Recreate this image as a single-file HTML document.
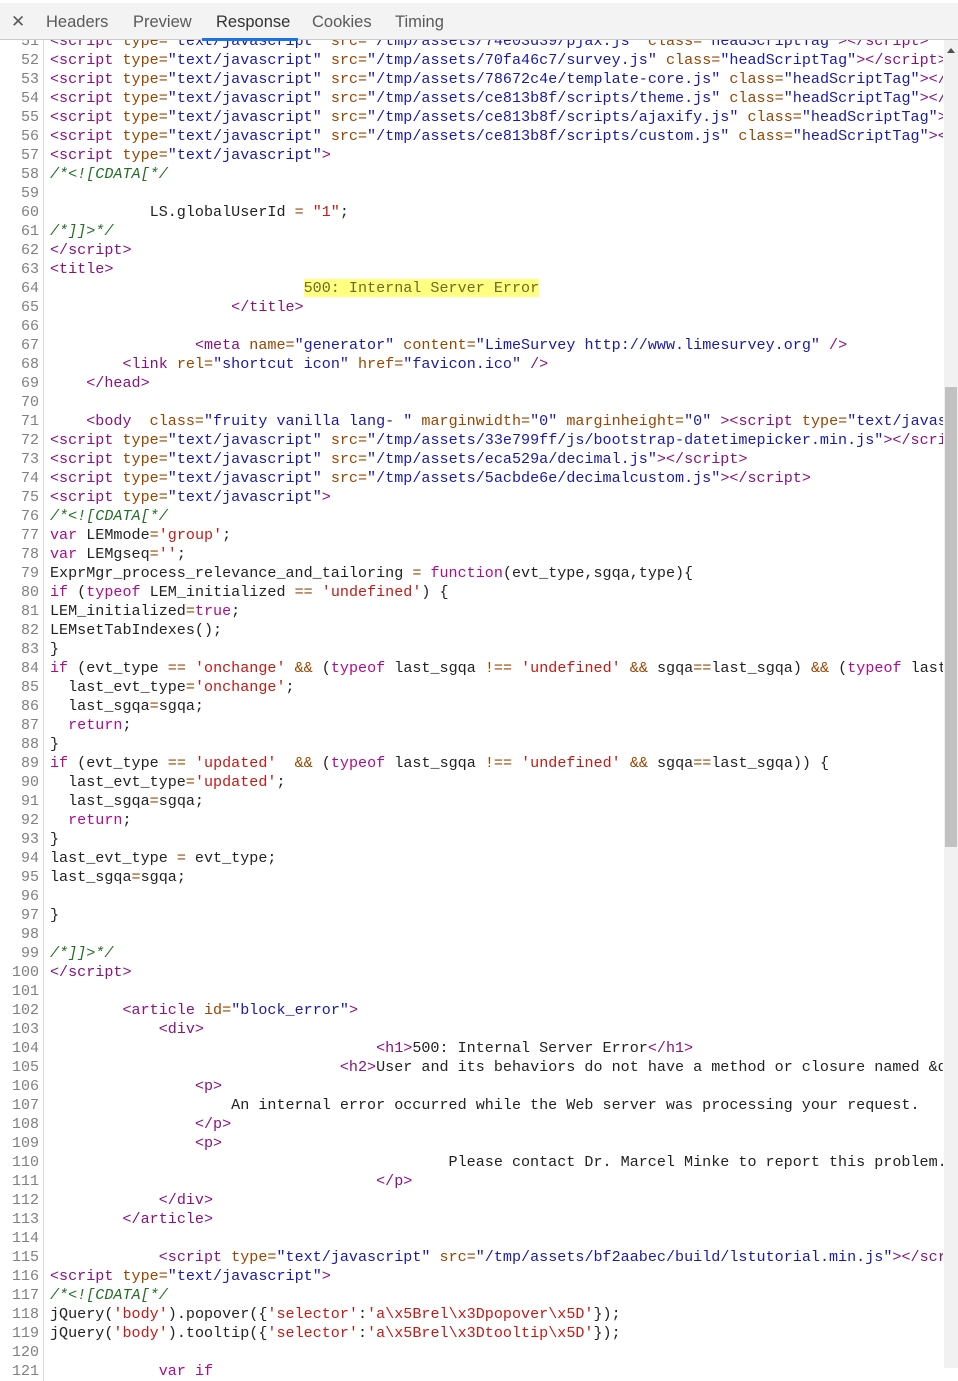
<!DOCTYPE html>
<html><head><meta charset="utf-8"><style>
html,body{margin:0;padding:0;width:958px;height:1368px;overflow:hidden;background:#fff}
#hdr{position:absolute;left:0;top:0;width:958px;height:40px;background:#f3f3f3;border-bottom:1px solid #ccc;box-sizing:border-box;border-top:3px solid #fff;z-index:2;font-family:"Liberation Sans",sans-serif;font-size:16.5px;color:#5a5a5a}
#hdr span{position:absolute;top:10px}
#ul{position:absolute;left:202px;top:35px;width:96px;height:3px;background:#1a73e8}
#code{position:absolute;left:0;top:32px;width:943px;overflow:hidden;font-family:"Liberation Mono",monospace;font-size:15.1px;line-height:19px;color:#222}
.r{display:flex;height:19px;white-space:pre}
.n{width:39px;text-align:right;color:#808080;border-right:1px solid #ddd;padding-right:4px;box-sizing:content-box;flex:none;font-size:15px}
.l{padding-left:6px}
.t{color:#881280}.a{color:#994500}.v{color:#1a1aa6}.k{color:#aa0d91}.s{color:#c41a16}.c{color:#236e25;font-style:italic}
.h{background:#ffff80;color:#6b6b2b}
#sb{position:absolute;left:944px;top:40px;width:14px;height:1328px;background:#f1f1f1}
#th{position:absolute;left:945px;top:387px;width:12px;height:460px;background:#c1c1c1}
#ar{position:absolute;left:947px;top:48px;width:0;height:0;border-left:4px solid transparent;border-right:4px solid transparent;border-bottom:5px solid #505050}
</style></head><body>
<div id="hdr"><span style="left:11px;font-size:17px;top:9px">✕</span><span style="left:46px">Headers</span><span style="left:133px">Preview</span><span style="left:216px;color:#333">Response</span><span style="left:312px">Cookies</span><span style="left:395px">Timing</span><div id="ul"></div></div>
<div id="code">
<div class="r"><span class="n">51</span><span class="l"><span class="t">&lt;script </span><span class="a">type=</span><span class="v">"text/javascript"</span> <span class="a">src=</span><span class="v">"/tmp/assets/74e03d39/pjax.js"</span> <span class="a">class=</span><span class="v">"headScriptTag"</span><span class="t">&gt;&lt;/script&gt;</span></span></div>
<div class="r"><span class="n">52</span><span class="l"><span class="t">&lt;script </span><span class="a">type=</span><span class="v">"text/javascript"</span> <span class="a">src=</span><span class="v">"/tmp/assets/70fa46c7/survey.js"</span> <span class="a">class=</span><span class="v">"headScriptTag"</span><span class="t">&gt;&lt;/script&gt;</span></span></div>
<div class="r"><span class="n">53</span><span class="l"><span class="t">&lt;script </span><span class="a">type=</span><span class="v">"text/javascript"</span> <span class="a">src=</span><span class="v">"/tmp/assets/78672c4e/template-core.js"</span> <span class="a">class=</span><span class="v">"headScriptTag"</span><span class="t">&gt;&lt;/script&gt;</span></span></div>
<div class="r"><span class="n">54</span><span class="l"><span class="t">&lt;script </span><span class="a">type=</span><span class="v">"text/javascript"</span> <span class="a">src=</span><span class="v">"/tmp/assets/ce813b8f/scripts/theme.js"</span> <span class="a">class=</span><span class="v">"headScriptTag"</span><span class="t">&gt;&lt;/script&gt;</span></span></div>
<div class="r"><span class="n">55</span><span class="l"><span class="t">&lt;script </span><span class="a">type=</span><span class="v">"text/javascript"</span> <span class="a">src=</span><span class="v">"/tmp/assets/ce813b8f/scripts/ajaxify.js"</span> <span class="a">class=</span><span class="v">"headScriptTag"</span><span class="t">&gt;&lt;/script&gt;</span></span></div>
<div class="r"><span class="n">56</span><span class="l"><span class="t">&lt;script </span><span class="a">type=</span><span class="v">"text/javascript"</span> <span class="a">src=</span><span class="v">"/tmp/assets/ce813b8f/scripts/custom.js"</span> <span class="a">class=</span><span class="v">"headScriptTag"</span><span class="t">&gt;&lt;/script&gt;</span></span></div>
<div class="r"><span class="n">57</span><span class="l"><span class="t">&lt;script </span><span class="a">type=</span><span class="v">"text/javascript"</span><span class="t">&gt;</span></span></div>
<div class="r"><span class="n">58</span><span class="l"><span class="c">/*&lt;![CDATA[*/</span></span></div>
<div class="r"><span class="n">59</span><span class="l"></span></div>
<div class="r"><span class="n">60</span><span class="l">           LS.globalUserId <span class="a">=</span> <span class="s">"1"</span>;</span></div>
<div class="r"><span class="n">61</span><span class="l"><span class="c">/*]]&gt;*/</span></span></div>
<div class="r"><span class="n">62</span><span class="l"><span class="t">&lt;/script&gt;</span></span></div>
<div class="r"><span class="n">63</span><span class="l"><span class="t">&lt;title&gt;</span></span></div>
<div class="r"><span class="n">64</span><span class="l">                            <span class="h">500: Internal Server Error</span></span></div>
<div class="r"><span class="n">65</span><span class="l">                    <span class="t">&lt;/title&gt;</span></span></div>
<div class="r"><span class="n">66</span><span class="l"></span></div>
<div class="r"><span class="n">67</span><span class="l">                <span class="t">&lt;meta </span><span class="a">name=</span><span class="v">"generator"</span> <span class="a">content=</span><span class="v">"LimeSurvey http://www.limesurvey.org"</span> <span class="t">/&gt;</span></span></div>
<div class="r"><span class="n">68</span><span class="l">        <span class="t">&lt;link </span><span class="a">rel=</span><span class="v">"shortcut icon"</span> <span class="a">href=</span><span class="v">"favicon.ico"</span> <span class="t">/&gt;</span></span></div>
<div class="r"><span class="n">69</span><span class="l">    <span class="t">&lt;/head&gt;</span></span></div>
<div class="r"><span class="n">70</span><span class="l"></span></div>
<div class="r"><span class="n">71</span><span class="l">    <span class="t">&lt;body  </span><span class="a">class=</span><span class="v">"fruity vanilla lang- "</span> <span class="a">marginwidth=</span><span class="v">"0"</span> <span class="a">marginheight=</span><span class="v">"0"</span> <span class="t">&gt;&lt;script </span><span class="a">type=</span><span class="v">"text/javascript"</span></span></div>
<div class="r"><span class="n">72</span><span class="l"><span class="t">&lt;script </span><span class="a">type=</span><span class="v">"text/javascript"</span> <span class="a">src=</span><span class="v">"/tmp/assets/33e799ff/js/bootstrap-datetimepicker.min.js"</span><span class="t">&gt;&lt;/script&gt;</span></span></div>
<div class="r"><span class="n">73</span><span class="l"><span class="t">&lt;script </span><span class="a">type=</span><span class="v">"text/javascript"</span> <span class="a">src=</span><span class="v">"/tmp/assets/eca529a/decimal.js"</span><span class="t">&gt;&lt;/script&gt;</span></span></div>
<div class="r"><span class="n">74</span><span class="l"><span class="t">&lt;script </span><span class="a">type=</span><span class="v">"text/javascript"</span> <span class="a">src=</span><span class="v">"/tmp/assets/5acbde6e/decimalcustom.js"</span><span class="t">&gt;&lt;/script&gt;</span></span></div>
<div class="r"><span class="n">75</span><span class="l"><span class="t">&lt;script </span><span class="a">type=</span><span class="v">"text/javascript"</span><span class="t">&gt;</span></span></div>
<div class="r"><span class="n">76</span><span class="l"><span class="c">/*&lt;![CDATA[*/</span></span></div>
<div class="r"><span class="n">77</span><span class="l"><span class="k">var</span> LEMmode<span class="a">=</span><span class="s">'group'</span>;</span></div>
<div class="r"><span class="n">78</span><span class="l"><span class="k">var</span> LEMgseq<span class="a">=</span><span class="s">''</span>;</span></div>
<div class="r"><span class="n">79</span><span class="l">ExprMgr_process_relevance_and_tailoring <span class="a">=</span> <span class="k">function</span>(evt_type,sgqa,type){</span></div>
<div class="r"><span class="n">80</span><span class="l"><span class="k">if</span> (<span class="k">typeof</span> LEM_initialized <span class="a">==</span> <span class="s">'undefined'</span>) {</span></div>
<div class="r"><span class="n">81</span><span class="l">LEM_initialized<span class="a">=</span><span class="k">true</span>;</span></div>
<div class="r"><span class="n">82</span><span class="l">LEMsetTabIndexes();</span></div>
<div class="r"><span class="n">83</span><span class="l">}</span></div>
<div class="r"><span class="n">84</span><span class="l"><span class="k">if</span> (evt_type <span class="a">==</span> <span class="s">'onchange'</span> <span class="a">&amp;&amp;</span> (<span class="k">typeof</span> last_sgqa <span class="a">!==</span> <span class="s">'undefined'</span> <span class="a">&amp;&amp;</span> sgqa<span class="a">==</span>last_sgqa) <span class="a">&amp;&amp;</span> (<span class="k">typeof</span> last_evt_type</span></div>
<div class="r"><span class="n">85</span><span class="l">  last_evt_type<span class="a">=</span><span class="s">'onchange'</span>;</span></div>
<div class="r"><span class="n">86</span><span class="l">  last_sgqa<span class="a">=</span>sgqa;</span></div>
<div class="r"><span class="n">87</span><span class="l">  <span class="k">return</span>;</span></div>
<div class="r"><span class="n">88</span><span class="l">}</span></div>
<div class="r"><span class="n">89</span><span class="l"><span class="k">if</span> (evt_type <span class="a">==</span> <span class="s">'updated'</span>  <span class="a">&amp;&amp;</span> (<span class="k">typeof</span> last_sgqa <span class="a">!==</span> <span class="s">'undefined'</span> <span class="a">&amp;&amp;</span> sgqa<span class="a">==</span>last_sgqa)) {</span></div>
<div class="r"><span class="n">90</span><span class="l">  last_evt_type<span class="a">=</span><span class="s">'updated'</span>;</span></div>
<div class="r"><span class="n">91</span><span class="l">  last_sgqa<span class="a">=</span>sgqa;</span></div>
<div class="r"><span class="n">92</span><span class="l">  <span class="k">return</span>;</span></div>
<div class="r"><span class="n">93</span><span class="l">}</span></div>
<div class="r"><span class="n">94</span><span class="l">last_evt_type <span class="a">=</span> evt_type;</span></div>
<div class="r"><span class="n">95</span><span class="l">last_sgqa<span class="a">=</span>sgqa;</span></div>
<div class="r"><span class="n">96</span><span class="l"></span></div>
<div class="r"><span class="n">97</span><span class="l">}</span></div>
<div class="r"><span class="n">98</span><span class="l"></span></div>
<div class="r"><span class="n">99</span><span class="l"><span class="c">/*]]&gt;*/</span></span></div>
<div class="r"><span class="n">100</span><span class="l"><span class="t">&lt;/script&gt;</span></span></div>
<div class="r"><span class="n">101</span><span class="l"></span></div>
<div class="r"><span class="n">102</span><span class="l">        <span class="t">&lt;article </span><span class="a">id=</span><span class="v">"block_error"</span><span class="t">&gt;</span></span></div>
<div class="r"><span class="n">103</span><span class="l">            <span class="t">&lt;div&gt;</span></span></div>
<div class="r"><span class="n">104</span><span class="l">                                    <span class="t">&lt;h1&gt;</span>500: Internal Server Error<span class="t">&lt;/h1&gt;</span></span></div>
<div class="r"><span class="n">105</span><span class="l">                                <span class="t">&lt;h2&gt;</span>User and its behaviors do not have a method or closure named &amp;quot;</span></div>
<div class="r"><span class="n">106</span><span class="l">                <span class="t">&lt;p&gt;</span></span></div>
<div class="r"><span class="n">107</span><span class="l">                    An internal error occurred while the Web server was processing your request.</span></div>
<div class="r"><span class="n">108</span><span class="l">                <span class="t">&lt;/p&gt;</span></span></div>
<div class="r"><span class="n">109</span><span class="l">                <span class="t">&lt;p&gt;</span></span></div>
<div class="r"><span class="n">110</span><span class="l">                                            Please contact Dr. Marcel Minke to report this problem.</span></div>
<div class="r"><span class="n">111</span><span class="l">                                    <span class="t">&lt;/p&gt;</span></span></div>
<div class="r"><span class="n">112</span><span class="l">            <span class="t">&lt;/div&gt;</span></span></div>
<div class="r"><span class="n">113</span><span class="l">        <span class="t">&lt;/article&gt;</span></span></div>
<div class="r"><span class="n">114</span><span class="l"></span></div>
<div class="r"><span class="n">115</span><span class="l">            <span class="t">&lt;script </span><span class="a">type=</span><span class="v">"text/javascript"</span> <span class="a">src=</span><span class="v">"/tmp/assets/bf2aabec/build/lstutorial.min.js"</span><span class="t">&gt;&lt;/script&gt;</span></span></div>
<div class="r"><span class="n">116</span><span class="l"><span class="t">&lt;script </span><span class="a">type=</span><span class="v">"text/javascript"</span><span class="t">&gt;</span></span></div>
<div class="r"><span class="n">117</span><span class="l"><span class="c">/*&lt;![CDATA[*/</span></span></div>
<div class="r"><span class="n">118</span><span class="l">jQuery(<span class="s">'body'</span>).popover({<span class="s">'selector'</span>:<span class="s">'a\x5Brel\x3Dpopover\x5D'</span>});</span></div>
<div class="r"><span class="n">119</span><span class="l">jQuery(<span class="s">'body'</span>).tooltip({<span class="s">'selector'</span>:<span class="s">'a\x5Brel\x3Dtooltip\x5D'</span>});</span></div>
<div class="r"><span class="n">120</span><span class="l"></span></div>
<div class="r"><span class="n">121</span><span class="l">            <span class="k">var</span> <span class="k">if</span></span></div>
</div>
<div id="sb"></div><div id="th"></div><div id="ar"></div>
</body></html>
